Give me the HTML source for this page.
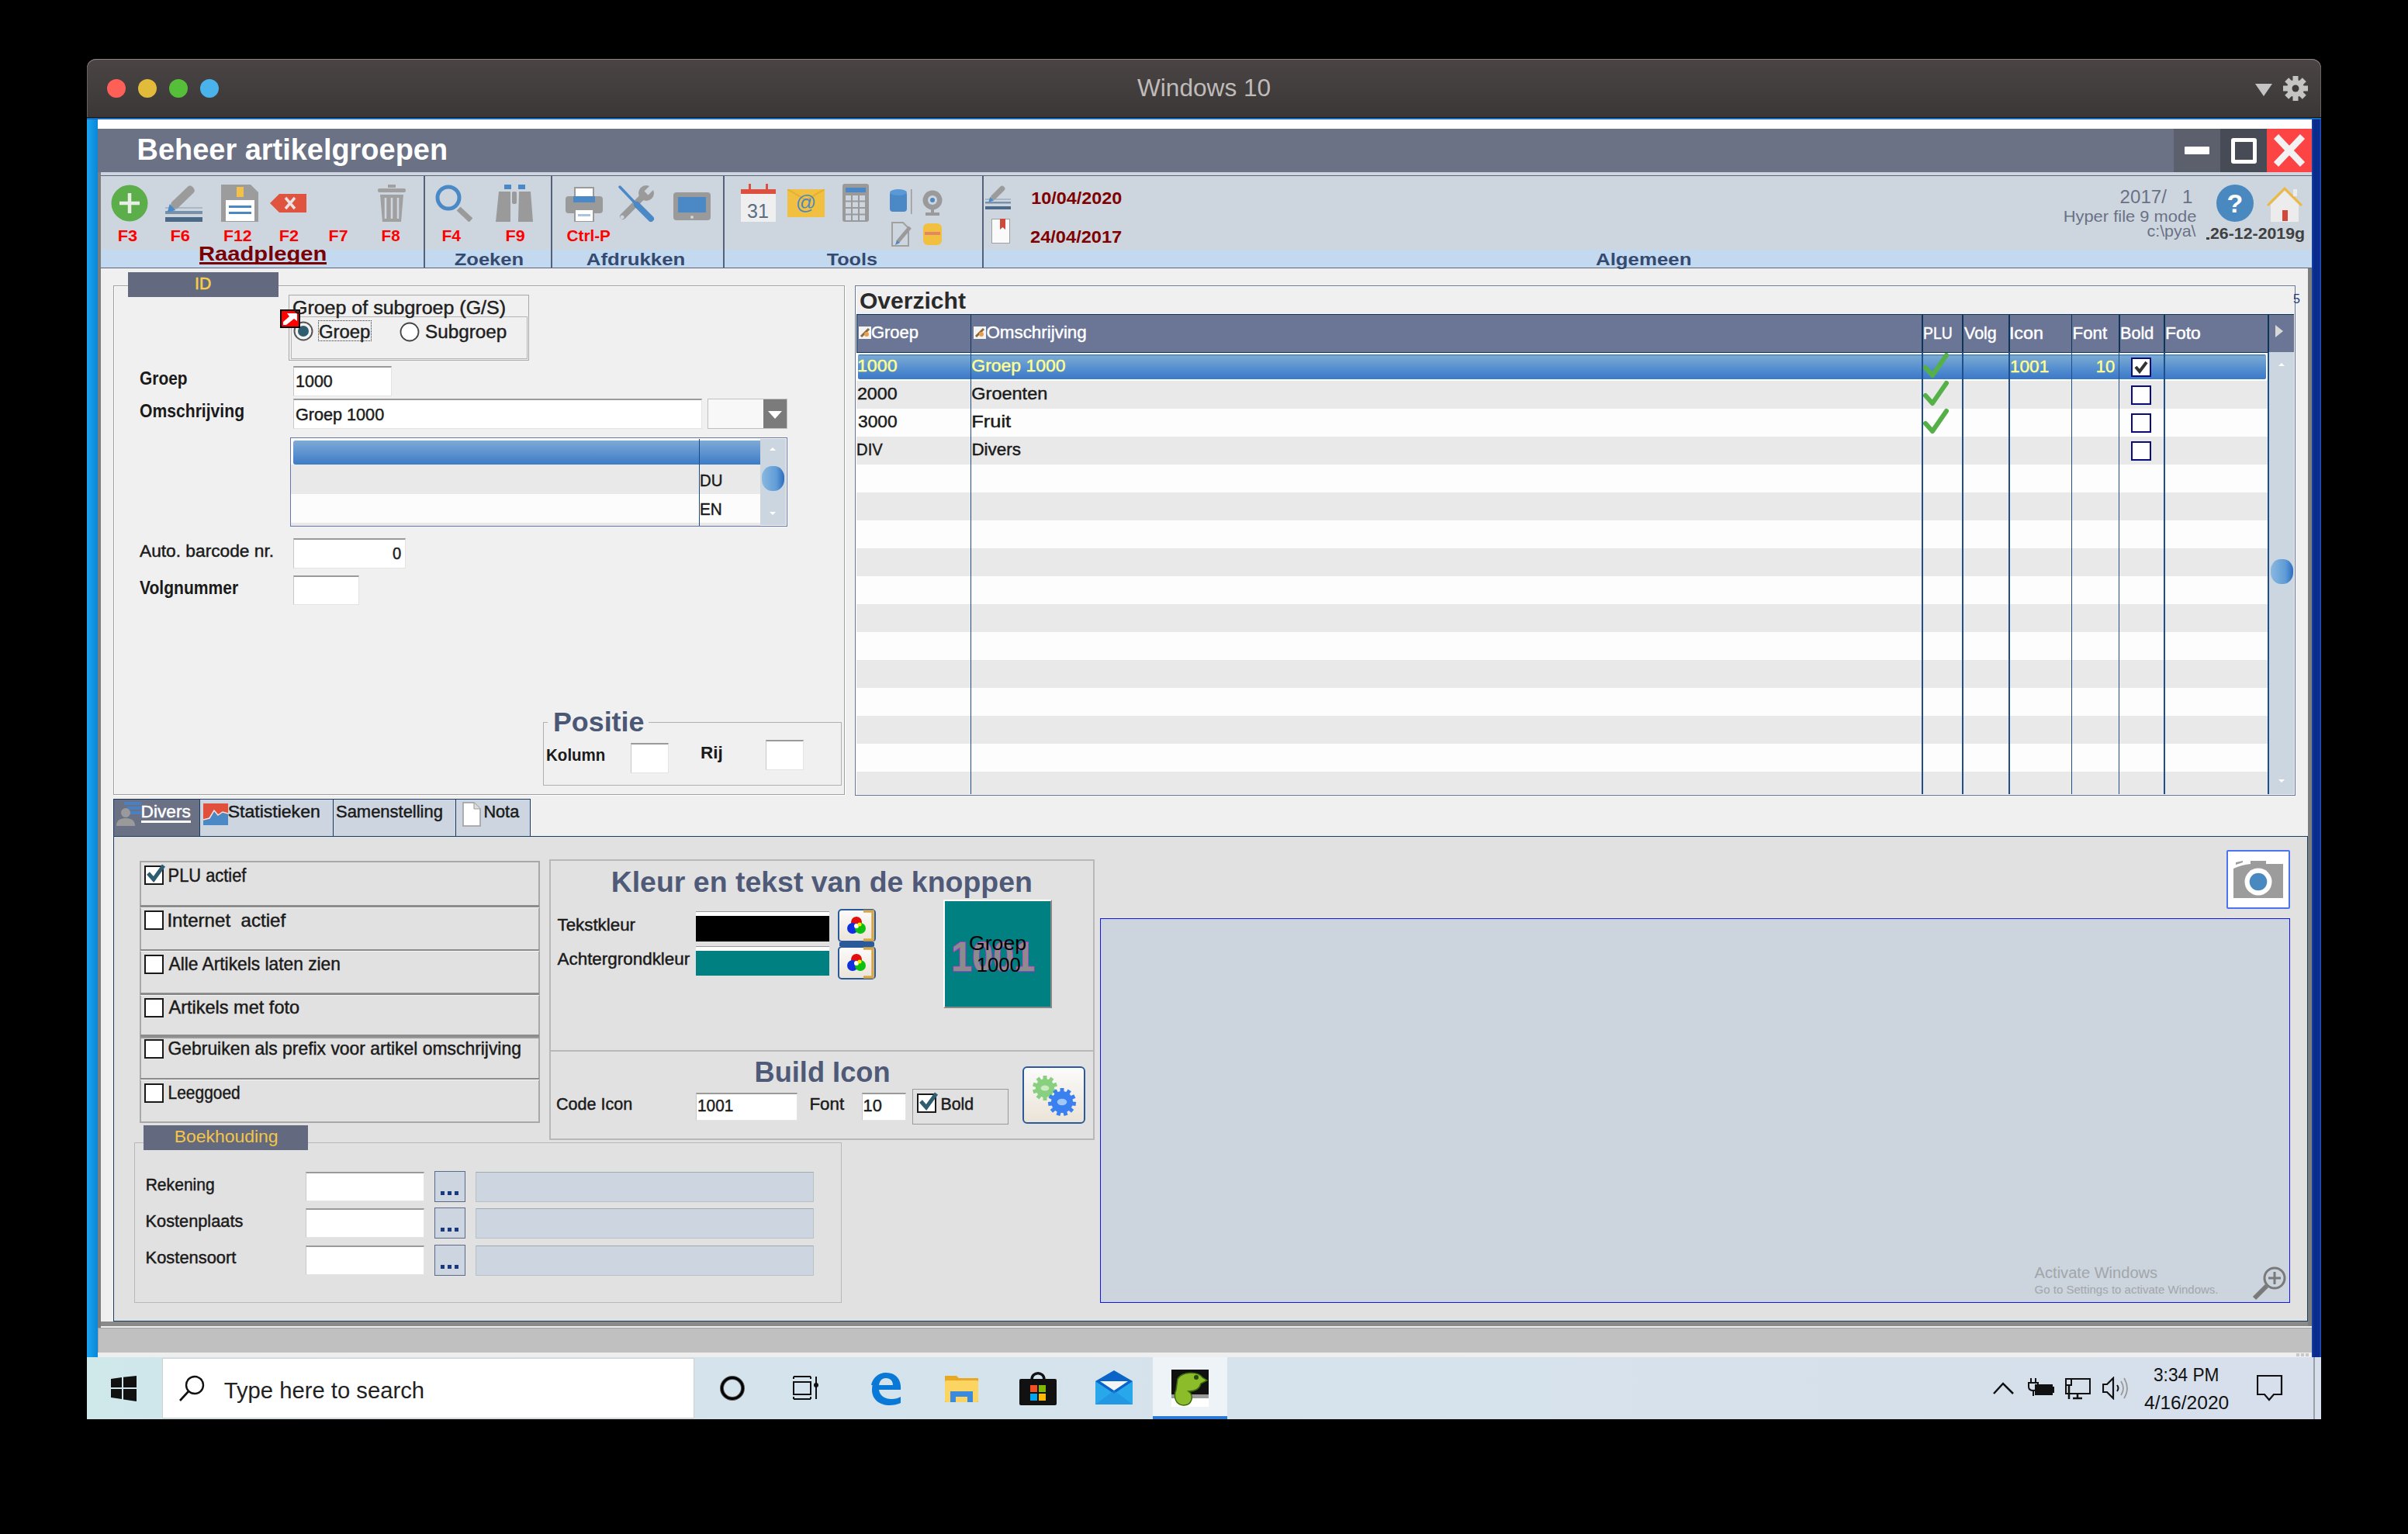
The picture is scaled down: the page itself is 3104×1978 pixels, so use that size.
<!DOCTYPE html>
<html><head><meta charset="utf-8"><title>Beheer artikelgroepen</title>
<style>
html,body{margin:0;padding:0;background:#000;width:3104px;height:1978px;overflow:hidden;font-family:"Liberation Sans",sans-serif}
#root{position:relative;width:3104px;height:1978px;overflow:hidden}
#root>div,#root>svg{position:absolute}
</style></head><body><div id="root">
<div style="left:112px;top:76px;width:2880px;height:76px;background:linear-gradient(#4a4544,#3b3737);border-radius:12px 12px 0 0;box-shadow:inset 0 1px 0 #8c8786, inset 1px 0 0 #666261, inset -1px 0 0 #666261"></div>
<div style="left:138px;top:102px;width:24px;height:24px;background:#fe5f57;border-radius:50%"></div>
<div style="left:178px;top:102px;width:24px;height:24px;background:#e3bb3b;border-radius:50%"></div>
<div style="left:218px;top:102px;width:24px;height:24px;background:#56bf3a;border-radius:50%"></div>
<div style="left:258px;top:102px;width:24px;height:24px;background:#4ab3ec;border-radius:50%"></div>
<svg style="left:2900px;top:95px" width="80" height="40" viewBox="0 0 80 40"><path d="M7 13 L29 13 L18 29 Z" fill="#c4c4c4"/><g transform="translate(59,19)" fill="#c4c4c4"><rect x="-3.5" y="-16" width="7" height="9" transform="rotate(0)"/><rect x="-3.5" y="-16" width="7" height="9" transform="rotate(45)"/><rect x="-3.5" y="-16" width="7" height="9" transform="rotate(90)"/><rect x="-3.5" y="-16" width="7" height="9" transform="rotate(135)"/><rect x="-3.5" y="-16" width="7" height="9" transform="rotate(180)"/><rect x="-3.5" y="-16" width="7" height="9" transform="rotate(225)"/><rect x="-3.5" y="-16" width="7" height="9" transform="rotate(270)"/><rect x="-3.5" y="-16" width="7" height="9" transform="rotate(315)"/><circle r="11"/><circle r="4.5" fill="#3e3a3a"/></g></svg>
<div style="left:112px;top:151px;width:2880px;height:1px;background:#151515;"></div>
<div style="left:112px;top:152px;width:2880px;height:1598px;background:#f0f0f0;"></div>
<div style="left:112px;top:152px;width:14px;height:1598px;background:linear-gradient(90deg,#1aa6f2,#0a86d6);"></div>
<div style="left:2980px;top:152px;width:12px;height:1598px;background:linear-gradient(90deg,#1a48b0 0%,#0a2c8c 20%,#0a2c8c 80%,#2a58c8 100%);"></div>
<div style="left:112px;top:152px;width:2880px;height:2px;background:#1668b8;"></div>
<div style="left:126px;top:154px;width:2854px;height:12px;background:#ffffff;"></div>
<div style="left:126px;top:166px;width:2854px;height:56px;background:#6b7285;"></div>
<div style="left:2802px;top:166px;width:60px;height:56px;background:#5c606c;"></div>
<div style="left:2862px;top:166px;width:60px;height:56px;background:#474b56;"></div>
<div style="left:2922px;top:166px;width:58px;height:56px;background:#fd4444;"></div>
<div style="left:2816px;top:189px;width:32px;height:10px;background:#ffffff;border-radius:1px"></div>
<div style="left:2876px;top:178px;width:33px;height:33px;background:transparent;border:5px solid #fff;border-radius:3px;box-sizing:border-box"></div>
<svg style="left:2922px;top:166px" width="58" height="56"><path d="M12 10 L46 46 M46 10 L12 46" stroke="#f2f2f2" stroke-width="8.5"/></svg>
<div style="left:126px;top:222px;width:4px;height:1490px;background:#7d7d7d;"></div>
<div style="left:2975px;top:346px;width:5px;height:1364px;background:#7d7d7d;"></div>
<div style="left:130px;top:222px;width:2850px;height:5px;background:#cdd6e0;"></div>
<div style="left:130px;top:226px;width:2850px;height:1px;background:#5d6577;"></div>
<div style="left:130px;top:227px;width:2850px;height:95px;background:#cdd6df;"></div>
<div style="left:130px;top:322px;width:2850px;height:23px;background:#c3d9ef;"></div>
<div style="left:130px;top:345px;width:2850px;height:1px;background:#5d6577;"></div>
<div style="left:546px;top:227px;width:2px;height:118px;background:#55607a;"></div>
<div style="left:710px;top:227px;width:2px;height:118px;background:#55607a;"></div>
<div style="left:932px;top:227px;width:2px;height:118px;background:#55607a;"></div>
<div style="left:1266px;top:227px;width:2px;height:118px;background:#55607a;"></div>
<svg style="left:143px;top:238px" width="48" height="48" viewBox="0 0 48 48"><circle cx="24" cy="24" r="23.5" fill="#5bae49"/><path d="M24 11V37M11 24H37" stroke="#e8eee6" stroke-width="4.5"/></svg>
<svg style="left:213px;top:238px" width="48" height="48" viewBox="0 0 48 48"><rect x="0" y="29" width="48" height="2" fill="#a8b8c8"/><rect x="0" y="34" width="48" height="4" fill="#7890a8"/><rect x="0" y="42" width="48" height="6" fill="#4c6a88"/><g transform="rotate(-44 20 19)"><rect x="5" y="13.5" width="37" height="11" rx="4.5" fill="#9b9b9b"/><path d="M5.5 13.5 L-4 19 L5.5 24.5 Z" fill="#4a8ac8"/></g></svg>
<svg style="left:285px;top:238px" width="48" height="48" viewBox="0 0 48 48"><path d="M0 0 H38 L48 10 V48 H0 Z" fill="#9c9c9c"/><rect x="20" y="3" width="9" height="13" fill="#f2c14a"/><rect x="6" y="20" width="37" height="27" fill="#fff"/><rect x="10" y="27" width="29" height="3" fill="#4a88c2"/><rect x="10" y="35" width="29" height="3" fill="#4a88c2"/></svg>
<svg style="left:348px;top:250px" width="47" height="24" viewBox="0 0 47 24"><path d="M0 12 L12 0 H47 V24 H12 Z" fill="#e0533f"/><path d="M20 5 L32 19 M32 5 L20 19" stroke="#e8e2e2" stroke-width="3.5"/></svg>
<svg style="left:487px;top:238px" width="36" height="48" viewBox="0 0 36 48"><rect x="13" y="0" width="10" height="4" fill="#a0a0a0"/><rect x="0" y="5" width="36" height="5" rx="2" fill="#a0a0a0"/><path d="M3 13 H33 L30 48 H6 Z" fill="#a0a0a0"/><path d="M10 17 V44 M18 17 V44 M26 17 V44" stroke="#cdd6df" stroke-width="2.5"/></svg>
<svg style="left:561px;top:238px" width="48" height="48" viewBox="0 0 48 48"><circle cx="17" cy="17" r="14" fill="none" stroke="#4a88c6" stroke-width="5"/><path d="M30 31 L46 46" stroke="#9a9a9a" stroke-width="7"/></svg>
<svg style="left:639px;top:238px" width="48" height="48" viewBox="0 0 48 48"><rect x="11" y="0" width="9" height="6" fill="#4a88c6"/><rect x="29" y="0" width="9" height="6" fill="#4a88c6"/><path d="M4 9 H19 V48 H0 Z" fill="#9a9a9a"/><path d="M30 9 H45 L48 48 H29 Z" fill="#9a9a9a"/><rect x="21" y="9" width="6" height="16" rx="2" fill="#9a9a9a"/></svg>
<svg style="left:729px;top:240px" width="48" height="46" viewBox="0 0 48 46"><rect x="12" y="2" width="24" height="12" fill="#fff" stroke="#9a9a9a" stroke-width="2"/><rect x="0" y="13" width="48" height="22" rx="4" fill="#9a9a9a"/><rect x="10" y="13" width="28" height="8" fill="#4a88c6"/><rect x="12" y="30" width="24" height="16" fill="#fff" stroke="#9a9a9a" stroke-width="2"/><rect x="16" y="36" width="16" height="3" fill="#a8c4e0"/></svg>
<svg style="left:796px;top:238px" width="48" height="48" viewBox="0 0 48 48"><path d="M7 41 L33 15" stroke="#9a9a9a" stroke-width="8" stroke-linecap="round"/><circle cx="37" cy="11" r="10" fill="#9a9a9a"/><rect x="33.5" y="-4" width="7" height="15" transform="rotate(45 37 11)" fill="#cdd6df"/><circle cx="6" cy="42" r="2.5" fill="#cdd6df"/><path d="M3 3 L22 23" stroke="#4a88c6" stroke-width="3.5" stroke-linecap="round"/><path d="M25 26 L43 44" stroke="#4a88c6" stroke-width="8" stroke-linecap="round"/></svg>
<svg style="left:868px;top:248px" width="48" height="36" viewBox="0 0 48 36"><rect x="0" y="0" width="48" height="36" rx="4" fill="#9a9a9a"/><rect x="6" y="6" width="36" height="20" fill="#4a88c6"/><circle cx="24" cy="32" r="2" fill="#cdd6df"/></svg>
<svg style="left:955px;top:237px" width="45" height="49" viewBox="0 0 45 49"><rect x="0" y="7" width="45" height="42" fill="#efefef"/><rect x="0" y="7" width="45" height="6" fill="#dd5040"/><rect x="10" y="0" width="3" height="8" fill="#dd5040"/><rect x="32" y="0" width="3" height="8" fill="#dd5040"/><text x="22" y="44" font-family="Liberation Sans" font-size="25" fill="#5a6e84" text-anchor="middle">31</text></svg>
<svg style="left:1015px;top:244px" width="48" height="36" viewBox="0 0 48 36"><rect width="48" height="36" fill="#f2c040"/><path d="M0 0 L24 14 L48 0" fill="none" stroke="#e4b030" stroke-width="2"/><text x="24" y="26" font-family="Liberation Sans" font-size="26" fill="#4a88c6" text-anchor="middle">@</text></svg>
<svg style="left:1086px;top:237px" width="34" height="49" viewBox="0 0 34 49"><rect width="34" height="49" rx="3" fill="#9a9a9a"/><rect x="4" y="5" width="26" height="6" fill="#4a88c6"/><rect x="4" y="15.0" width="7" height="6.5" fill="#cdd6df"/><rect x="4" y="23.5" width="7" height="6.5" fill="#cdd6df"/><rect x="4" y="32.0" width="7" height="6.5" fill="#cdd6df"/><rect x="4" y="40.5" width="7" height="6.5" fill="#cdd6df"/><rect x="13" y="15.0" width="7" height="6.5" fill="#cdd6df"/><rect x="13" y="23.5" width="7" height="6.5" fill="#cdd6df"/><rect x="13" y="32.0" width="7" height="6.5" fill="#cdd6df"/><rect x="13" y="40.5" width="7" height="6.5" fill="#cdd6df"/><rect x="22" y="15.0" width="7" height="6.5" fill="#cdd6df"/><rect x="22" y="23.5" width="7" height="6.5" fill="#cdd6df"/><rect x="22" y="32.0" width="7" height="6.5" fill="#cdd6df"/><rect x="22" y="40.5" width="7" height="6.5" fill="#cdd6df"/></svg>
<svg style="left:1147px;top:244px" width="30" height="32" viewBox="0 0 30 32"><rect x="0" y="3" width="22" height="26" rx="4" fill="#4a88c6"/><ellipse cx="11" cy="4" rx="11" ry="4" fill="#5a98d6"/><rect x="27" y="0" width="1.5" height="32" fill="#9a9a9a"/></svg>
<svg style="left:1188px;top:245px" width="28" height="33" viewBox="0 0 28 33"><circle cx="14" cy="13" r="12.5" fill="#9a9a9a"/><circle cx="14" cy="13" r="6" fill="#cdd6df"/><circle cx="14" cy="13" r="3" fill="#4a88c6"/><rect x="12" y="24" width="4" height="5" fill="#9a9a9a"/><rect x="5" y="29" width="18" height="4" fill="#9a9a9a"/></svg>
<svg style="left:1149px;top:286px" width="28" height="32" viewBox="0 0 28 32"><path d="M1 1 H15 L22 8 V31 H1 Z" fill="none" stroke="#a0a0a0" stroke-width="2"/><path d="M8 26 L24 7" stroke="#9a9a9a" stroke-width="5"/><path d="M5 30 L7 24 L11 27 Z" fill="#4a88c6"/></svg>
<svg style="left:1190px;top:286px" width="24" height="32" viewBox="0 0 24 32"><rect x="0" y="2" width="24" height="28" rx="6" fill="#f2c040"/><rect x="2" y="13" width="20" height="4" fill="#e07070" opacity=".7"/></svg>
<svg style="left:1270px;top:237px" width="33" height="34" viewBox="0 0 33 34"><rect x="0" y="19" width="33" height="2" fill="#a8b8c8"/><rect x="0" y="23" width="33" height="2.5" fill="#7890a8"/><rect x="0" y="29" width="33" height="4" fill="#4c6a88"/><g transform="rotate(-45 15 13)"><rect x="6" y="9.5" width="22" height="7" rx="3" fill="#9b9b9b"/><path d="M6 9.5 L0 13 L6 16.5 Z" fill="#4a8ac8"/></g></svg>
<svg style="left:1278px;top:282px" width="24" height="32" viewBox="0 0 24 32"><rect x="0.5" y="0.5" width="23" height="31" fill="#fafafa" stroke="#a0a0a0"/><path d="M11 0 H18 V14 L14.5 11 L11 14 Z" fill="#d04a3c"/></svg>
<svg style="left:2857px;top:238px" width="48" height="48" viewBox="0 0 48 48"><circle cx="24" cy="24" r="24" fill="#4a88c0"/><text x="24" y="36" font-family="Liberation Sans" font-weight="bold" font-size="34" fill="#fff" text-anchor="middle">?</text></svg>
<svg style="left:2922px;top:240px" width="46" height="46" viewBox="0 0 46 46"><path d="M5 24 L23 6 L41 24 V46 H5 Z" fill="#ececec"/><path d="M1 25 L23 3 L45 25" fill="none" stroke="#f0b83a" stroke-width="3"/><rect x="34" y="4" width="5" height="9" fill="#ececec"/><rect x="20" y="31" width="7" height="14" fill="#d04a3c"/></svg>
<div style="left:257px;top:338px;width:164px;height:3px;background:#7d0000;"></div>
<div style="left:2844px;top:306px;width:4px;height:2.5px;background:#404040;"></div>
<div style="left:146px;top:368px;width:943px;height:657px;background:transparent;box-sizing:border-box;border:1px solid #a0a0a0;box-shadow:inset 1px 1px 0 #fff, 1px 1px 0 #fff"></div>
<div style="left:165px;top:351px;width:194px;height:32px;background:#636a80;"></div>
<div style="left:372px;top:380px;width:310px;height:85px;background:transparent;border:1px solid #a8a8a8;box-sizing:border-box"></div>
<div style="left:375px;top:408px;width:305px;height:55px;background:transparent;border:1px solid #b4b4b4;box-sizing:border-box"></div>
<svg style="left:378px;top:414px" width="28" height="28"><circle cx="13" cy="13" r="11.5" fill="#f4f4f4" stroke="#555" stroke-width="2"/><circle cx="13" cy="13" r="7" fill="#2e5d70"/></svg>
<svg style="left:514px;top:414px" width="28" height="28"><circle cx="14" cy="14" r="11.5" fill="#fff" stroke="#444" stroke-width="1.8"/></svg>
<div style="left:410px;top:413px;width:69px;height:27px;background:transparent;border:1px dotted #333;box-sizing:border-box"></div>
<svg style="left:361px;top:399px" width="26" height="24"><rect x="1" y="1" width="24" height="22" fill="#f00" stroke="#000" stroke-width="2"/><path d="M4 16 L12 9 L9 5 H22 V15 L18 12 L8 20 H4 Z" fill="#fff"/></svg>
<div style="left:378px;top:472px;width:127px;height:39px;background:#ffffff;box-sizing:border-box;border-top:2px solid #9a9a9a;border-left:1px solid #c8c8c8;border-right:1px solid #e4e4e4;border-bottom:1px solid #e4e4e4"></div>
<div style="left:378px;top:514px;width:527px;height:39px;background:#ffffff;box-sizing:border-box;border-top:2px solid #9a9a9a;border-left:1px solid #c8c8c8;border-right:1px solid #e4e4e4;border-bottom:1px solid #e4e4e4"></div>
<div style="left:912px;top:514px;width:103px;height:39px;background:#f8f8f8;box-sizing:border-box;border:1px solid #c0c0c0"></div>
<div style="left:984px;top:515px;width:30px;height:37px;background:#7b7b7b;"></div>
<svg style="left:984px;top:515px" width="30" height="37"><path d="M6 15 H24 L15 25 Z" fill="#fff"/></svg>
<div style="left:374px;top:564px;width:641px;height:115px;background:#fcfcfc;box-sizing:border-box;border:1px solid #6676a8"></div>
<div style="left:378px;top:568px;width:602px;height:31px;background:linear-gradient(#7eaad6,#3d7cc8);border-radius:3px 0 0 3px"></div>
<div style="left:375px;top:599px;width:605px;height:38px;background:#e9e9e9;"></div>
<div style="left:375px;top:637px;width:605px;height:37px;background:#fcfcfc;"></div>
<div style="left:375px;top:674px;width:605px;height:4px;background:#e9e9e9;"></div>
<div style="left:900.5px;top:566px;width:1.2px;height:112px;background:#1d4a88;"></div>
<div style="left:980px;top:566px;width:33px;height:111px;background:#ccd6e0;"></div>
<div style="left:982px;top:601px;width:29px;height:32px;background:linear-gradient(90deg,#8ab8e0,#5f9cd6 65%,#2d6cc0);border-radius:45%"></div>
<svg style="left:990px;top:575px" width="12" height="8"><path d="M2 6 L6 2 L10 6Z" fill="#fff"/></svg>
<svg style="left:990px;top:658px" width="12" height="8"><path d="M2 2 L6 6 L10 2Z" fill="#fff"/></svg>
<div style="left:378px;top:694px;width:145px;height:39px;background:#ffffff;box-sizing:border-box;border-top:2px solid #9a9a9a;border-left:1px solid #c8c8c8;border-right:1px solid #e4e4e4;border-bottom:1px solid #e4e4e4"></div>
<div style="left:378px;top:742px;width:85px;height:38px;background:#ffffff;box-sizing:border-box;border-top:2px solid #9a9a9a;border-left:1px solid #c8c8c8;border-right:1px solid #e4e4e4;border-bottom:1px solid #e4e4e4"></div>
<div style="left:700px;top:931px;width:385px;height:82px;background:transparent;box-sizing:border-box;border:1px solid #b0b0b0"></div>
<div style="left:706px;top:915px;width:130px;height:24px;background:#f0f0f0;"></div>
<div style="left:813px;top:958px;width:49px;height:39px;background:#ffffff;box-sizing:border-box;border-top:2px solid #9a9a9a;border-left:1px solid #c8c8c8;border-right:1px solid #e4e4e4;border-bottom:1px solid #e4e4e4"></div>
<div style="left:987px;top:954px;width:49px;height:39px;background:#ffffff;box-sizing:border-box;border-top:2px solid #9a9a9a;border-left:1px solid #c8c8c8;border-right:1px solid #e4e4e4;border-bottom:1px solid #e4e4e4"></div>
<div style="left:1102px;top:368px;width:1857px;height:658px;background:transparent;box-sizing:border-box;border:1px solid #6a7595;box-shadow:inset 1px 1px 0 #fff"></div>
<svg style="left:2955px;top:377px" width="14" height="16"><text x="1" y="14" font-family="Liberation Sans" font-size="16" fill="#1a3a80">5</text></svg>
<div style="left:1104px;top:405px;width:1853px;height:49.5px;background:#6b7596;border-top:1px solid #0d3558;border-bottom:1.5px solid #0d3558;border-left:1px solid #0d3558;box-sizing:border-box"></div>
<div style="left:1104px;top:454.5px;width:1820px;height:36px;background:#fdfdfd;"></div>
<div style="left:1104px;top:490.5px;width:1820px;height:36px;background:#e9e9e9;"></div>
<div style="left:1104px;top:526.5px;width:1820px;height:36px;background:#fdfdfd;"></div>
<div style="left:1104px;top:562.5px;width:1820px;height:36px;background:#e9e9e9;"></div>
<div style="left:1104px;top:598.5px;width:1820px;height:36px;background:#fdfdfd;"></div>
<div style="left:1104px;top:634.5px;width:1820px;height:36px;background:#e9e9e9;"></div>
<div style="left:1104px;top:670.5px;width:1820px;height:36px;background:#fdfdfd;"></div>
<div style="left:1104px;top:706.5px;width:1820px;height:36px;background:#e9e9e9;"></div>
<div style="left:1104px;top:742.5px;width:1820px;height:36px;background:#fdfdfd;"></div>
<div style="left:1104px;top:778.5px;width:1820px;height:36px;background:#e9e9e9;"></div>
<div style="left:1104px;top:814.5px;width:1820px;height:36px;background:#fdfdfd;"></div>
<div style="left:1104px;top:850.5px;width:1820px;height:36px;background:#e9e9e9;"></div>
<div style="left:1104px;top:886.5px;width:1820px;height:36px;background:#fdfdfd;"></div>
<div style="left:1104px;top:922.5px;width:1820px;height:36px;background:#e9e9e9;"></div>
<div style="left:1104px;top:958.5px;width:1820px;height:36px;background:#fdfdfd;"></div>
<div style="left:1104px;top:994.5px;width:1820px;height:29.5px;background:#e9e9e9;"></div>
<div style="left:1106px;top:457px;width:1815px;height:32px;background:linear-gradient(#4a84c8 0,#4a84c8 1px,#7aaad2 2px,#5a92d0 50%,#3a78c8);border-radius:2px"></div>
<div style="left:2924px;top:454px;width:33px;height:570px;background:#ccd6e0;"></div>
<div style="left:2927px;top:721px;width:29px;height:32px;background:linear-gradient(90deg,#8ab8e0,#5f9cd6 65%,#2d6cc0);border-radius:45%"></div>
<svg style="left:2935px;top:466px" width="12" height="8"><path d="M2 6 L6 2 L10 6Z" fill="#fff"/></svg>
<svg style="left:2935px;top:1003px" width="12" height="8"><path d="M2 2 L6 6 L10 2Z" fill="#fff"/></svg>
<svg style="left:2930px;top:417px" width="16" height="20"><path d="M3 2 L13 10 L3 18Z" fill="#d8d8d8"/></svg>
<div style="left:1250.75px;top:405px;width:1.6px;height:49px;background:#0d3558;"></div>
<div style="left:1250.75px;top:454px;width:1.3px;height:570px;background:#1f4f8a;"></div>
<div style="left:2477.45px;top:405px;width:1.6px;height:49px;background:#0d3558;"></div>
<div style="left:2477.45px;top:454px;width:1.3px;height:570px;background:#1f4f8a;"></div>
<div style="left:2529.25px;top:405px;width:1.6px;height:49px;background:#0d3558;"></div>
<div style="left:2529.25px;top:454px;width:1.3px;height:570px;background:#1f4f8a;"></div>
<div style="left:2589.25px;top:405px;width:1.6px;height:49px;background:#0d3558;"></div>
<div style="left:2589.25px;top:454px;width:1.3px;height:570px;background:#1f4f8a;"></div>
<div style="left:2669.55px;top:405px;width:1.6px;height:49px;background:#0d3558;"></div>
<div style="left:2669.55px;top:454px;width:1.3px;height:570px;background:#1f4f8a;"></div>
<div style="left:2731.15px;top:405px;width:1.6px;height:49px;background:#0d3558;"></div>
<div style="left:2731.15px;top:454px;width:1.3px;height:570px;background:#1f4f8a;"></div>
<div style="left:2789.25px;top:405px;width:1.6px;height:49px;background:#0d3558;"></div>
<div style="left:2789.25px;top:454px;width:1.3px;height:570px;background:#1f4f8a;"></div>
<div style="left:2923.45px;top:405px;width:1.6px;height:49px;background:#0d3558;"></div>
<div style="left:2923.45px;top:454px;width:1.3px;height:570px;background:#1f4f8a;"></div>
<div style="left:1102px;top:1024.5px;width:1857px;height:1.5px;background:#6a7595;"></div>
<svg style="left:1107px;top:421px" width="16" height="16"><rect width="16" height="16" fill="#f4f4f4"/><path d="M3 13 L13 3" stroke="#8a6a3a" stroke-width="3"/><circle cx="10" cy="10" r="3" fill="#e8a050"/></svg>
<svg style="left:1255px;top:421px" width="16" height="16"><rect width="16" height="16" fill="#f4f4f4"/><path d="M3 13 L13 3" stroke="#8a6a3a" stroke-width="3"/><circle cx="10" cy="10" r="3" fill="#e8a050"/></svg>
<svg style="left:2478px;top:454px" width="36" height="34"><path d="M4 20 L13 30 L31 4" fill="none" stroke="#55b048" stroke-width="6" stroke-linecap="round" stroke-linejoin="round"/></svg>
<svg style="left:2478px;top:490px" width="36" height="34"><path d="M4 20 L13 30 L31 4" fill="none" stroke="#55b048" stroke-width="6" stroke-linecap="round" stroke-linejoin="round"/></svg>
<svg style="left:2478px;top:526px" width="36" height="34"><path d="M4 20 L13 30 L31 4" fill="none" stroke="#55b048" stroke-width="6" stroke-linecap="round" stroke-linejoin="round"/></svg>
<div style="left:2747px;top:460.5px;width:25.5px;height:25.5px;background:#ffffff;box-sizing:border-box;border:2.5px solid #0a0a7a"></div>
<div style="left:2747px;top:496.5px;width:25.5px;height:25.5px;background:#ffffff;box-sizing:border-box;border:2.5px solid #0a0a7a"></div>
<div style="left:2747px;top:532.5px;width:25.5px;height:25.5px;background:#ffffff;box-sizing:border-box;border:2.5px solid #0a0a7a"></div>
<div style="left:2747px;top:568.5px;width:25.5px;height:25.5px;background:#ffffff;box-sizing:border-box;border:2.5px solid #0a0a7a"></div>
<svg style="left:2750px;top:464px" width="20" height="18"><path d="M3 9 L8 15 L17 3" fill="none" stroke="#333" stroke-width="4"/></svg>
<div style="left:146px;top:1030px;width:112px;height:48px;background:#6b7185;box-sizing:border-box;border:1.5px solid #1a3a60;border-bottom:none"></div>
<div style="left:258px;top:1030px;width:172px;height:48px;background:#cdd6e0;box-sizing:border-box;border:1.5px solid #1a3a60;border-bottom:none;border-left:none"></div>
<div style="left:430px;top:1030px;width:158px;height:48px;background:#cdd6e0;box-sizing:border-box;border:1.5px solid #1a3a60;border-bottom:none;border-left:none"></div>
<div style="left:588px;top:1030px;width:96px;height:48px;background:#cdd6e0;box-sizing:border-box;border:1.5px solid #1a3a60;border-bottom:none;border-left:none"></div>
<div style="left:182px;top:1058px;width:64px;height:2.5px;background:#ffffff;"></div>
<svg style="left:150px;top:1034px" width="34" height="32" viewBox="0 0 34 32"><rect x="10" y="0" width="22" height="4" fill="#4a80c0"/><rect x="14" y="6" width="18" height="4" fill="#4a80c0"/><rect x="14" y="12" width="18" height="4" fill="#4a80c0"/><circle cx="12" cy="14" r="6" fill="#9a9a9a"/><path d="M0 31 Q0 21 12 21 Q24 21 24 31 Z" fill="#9a9a9a"/></svg>
<svg style="left:262px;top:1036px" width="32" height="28" viewBox="0 0 32 28"><rect width="32" height="28" fill="#e0503c"/><path d="M0 28 V22 L8 20 L14 10 L19 16 L25 12 L32 14 V28 Z" fill="#4a88c6"/><path d="M0 21 L8 19 L14 9 L19 15 L25 11 L32 13" fill="none" stroke="#e8e8e8" stroke-width="1.5"/></svg>
<svg style="left:596px;top:1034px" width="24" height="32" viewBox="0 0 24 32"><path d="M1 1 H15 L23 9 V31 H1 Z" fill="#fff" stroke="#9a9a9a" stroke-width="1.5"/><path d="M15 1 V9 H23" fill="#ddd" stroke="#9a9a9a" stroke-width="1"/></svg>
<div style="left:146px;top:1077.5px;width:2829px;height:626.5px;background:#e1e1e1;box-sizing:border-box;border-top:1.5px solid #1c3e5e;border-left:1.5px solid #1c3e5e;border-right:1px solid #1c3e5e;border-bottom:1.5px solid #1c3e5e"></div>
<div style="left:130px;top:1704px;width:2845px;height:6px;background:#8a8a8a;"></div>
<div style="left:180px;top:1110px;width:516px;height:338px;background:transparent;box-sizing:border-box;border:2px solid #a8a8a8"></div>
<div style="left:181px;top:1167px;width:514px;height:2.5px;background:#8c8c8c;"></div>
<div style="left:181px;top:1169.5px;width:514px;height:1px;background:#f4f4f4;"></div>
<div style="left:181px;top:1223.5px;width:514px;height:2.5px;background:#8c8c8c;"></div>
<div style="left:181px;top:1226.0px;width:514px;height:1px;background:#f4f4f4;"></div>
<div style="left:181px;top:1280px;width:514px;height:2.5px;background:#8c8c8c;"></div>
<div style="left:181px;top:1282.5px;width:514px;height:1px;background:#f4f4f4;"></div>
<div style="left:181px;top:1334px;width:514px;height:2.5px;background:#8c8c8c;"></div>
<div style="left:181px;top:1336.5px;width:514px;height:1px;background:#f4f4f4;"></div>
<div style="left:181px;top:1389.5px;width:514px;height:2.5px;background:#8c8c8c;"></div>
<div style="left:181px;top:1392.0px;width:514px;height:1px;background:#f4f4f4;"></div>
<div style="left:181px;top:1337px;width:514px;height:2px;background:#9a9a9a;"></div>
<div style="left:185.5px;top:1116px;width:25px;height:25px;background:#ffffff;box-sizing:border-box;border:2.5px solid #1a1a1a"></div>
<svg style="left:187.5px;top:1113px" width="26" height="26"><path d="M3 13 L10 21 L23 3" fill="none" stroke="#2e5d70" stroke-width="5"/></svg>
<div style="left:185.5px;top:1174px;width:25px;height:25px;background:#ffffff;box-sizing:border-box;border:2.5px solid #1a1a1a"></div>
<div style="left:185.5px;top:1230.7px;width:25px;height:25px;background:#ffffff;box-sizing:border-box;border:2.5px solid #1a1a1a"></div>
<div style="left:185.5px;top:1286.6px;width:25px;height:25px;background:#ffffff;box-sizing:border-box;border:2.5px solid #1a1a1a"></div>
<div style="left:185.5px;top:1340px;width:25px;height:25px;background:#ffffff;box-sizing:border-box;border:2.5px solid #1a1a1a"></div>
<div style="left:185.5px;top:1396.7px;width:25px;height:25px;background:#ffffff;box-sizing:border-box;border:2.5px solid #1a1a1a"></div>
<div style="left:708px;top:1108px;width:703px;height:362px;background:transparent;box-sizing:border-box;border:2px solid #b8b8b8"></div>
<div style="left:710px;top:1354px;width:699px;height:2px;background:#b8b8b8;"></div>
<div style="left:897px;top:1176px;width:172px;height:38px;background:#000;box-sizing:border-box;border-top:5px solid #fff;box-shadow:0 -1px 0 #999"></div>
<div style="left:897px;top:1221px;width:172px;height:37px;background:#008080;box-sizing:border-box;border-top:5px solid #fff;box-shadow:0 -1px 0 #999"></div>
<div style="left:1082px;top:1215px;width:45px;height:5px;background:#2a5a9a;"></div>
<div style="left:1080px;top:1172px;width:49px;height:43px;background:linear-gradient(#fbfbfb,#ece4d8);box-sizing:border-box;border:2px solid #2a5a9a;border-radius:5px"></div>
<svg style="left:1080px;top:1172px" width="49" height="43"><path d="M33 3 H45 V40 H33" fill="none" stroke="#d8a848" stroke-width="3.5"/><circle cx="24" cy="17" r="7" fill="#e01010"/><circle cx="19" cy="25" r="7" fill="#1030e0"/><circle cx="29" cy="25" r="7" fill="#10c010"/><circle cx="24" cy="22" r="3" fill="#fff"/><circle cx="28" cy="20" r="2.5" fill="#f0f000"/></svg>
<div style="left:1080px;top:1219.5px;width:49px;height:43px;background:linear-gradient(#fbfbfb,#ece4d8);box-sizing:border-box;border:2px solid #2a5a9a;border-radius:5px"></div>
<svg style="left:1080px;top:1219.5px" width="49" height="43"><path d="M33 3 H45 V40 H33" fill="none" stroke="#d8a848" stroke-width="3.5"/><circle cx="24" cy="17" r="7" fill="#e01010"/><circle cx="19" cy="25" r="7" fill="#1030e0"/><circle cx="29" cy="25" r="7" fill="#10c010"/><circle cx="24" cy="22" r="3" fill="#fff"/><circle cx="28" cy="20" r="2.5" fill="#f0f000"/></svg>
<div style="left:1216px;top:1160px;width:140px;height:140px;background:#008080;box-sizing:border-box;border-top:2px solid #fff;border-left:2px solid #fff;border-right:2px solid #888;border-bottom:2px solid #888"></div>
<div style="left:896.5px;top:1408.5px;width:131px;height:36px;background:#ffffff;box-sizing:border-box;border-top:2px solid #9a9a9a;border-left:1px solid #c8c8c8;border-right:1px solid #e4e4e4;border-bottom:1px solid #e4e4e4"></div>
<div style="left:1110.6px;top:1408.5px;width:57px;height:36px;background:#ffffff;box-sizing:border-box;border-top:2px solid #9a9a9a;border-left:1px solid #c8c8c8;border-right:1px solid #e4e4e4;border-bottom:1px solid #e4e4e4"></div>
<div style="left:1176px;top:1404px;width:124px;height:46px;background:transparent;box-sizing:border-box;border:1.5px solid #9a9a9a"></div>
<div style="left:1181.5px;top:1410px;width:25px;height:25px;background:#ffffff;box-sizing:border-box;border:2.5px solid #1a1a1a"></div>
<svg style="left:1183.5px;top:1407px" width="26" height="26"><path d="M3 13 L10 21 L23 3" fill="none" stroke="#2e5d70" stroke-width="5"/></svg>
<div style="left:1318px;top:1375px;width:81px;height:74px;background:linear-gradient(#fbfbfb,#ebe3d6);box-sizing:border-box;border:2px solid #2a5a9a;border-radius:6px"></div>
<svg style="left:1325px;top:1385px" width="68" height="56" viewBox="0 0 68 56"><g transform="translate(22,18)" fill="#88d080"><rect x="-2.5" y="-16" width="5" height="8" transform="rotate(0.0)"/><rect x="-2.5" y="-16" width="5" height="8" transform="rotate(36.0)"/><rect x="-2.5" y="-16" width="5" height="8" transform="rotate(72.0)"/><rect x="-2.5" y="-16" width="5" height="8" transform="rotate(108.0)"/><rect x="-2.5" y="-16" width="5" height="8" transform="rotate(144.0)"/><rect x="-2.5" y="-16" width="5" height="8" transform="rotate(180.0)"/><rect x="-2.5" y="-16" width="5" height="8" transform="rotate(216.0)"/><rect x="-2.5" y="-16" width="5" height="8" transform="rotate(252.0)"/><rect x="-2.5" y="-16" width="5" height="8" transform="rotate(288.0)"/><rect x="-2.5" y="-16" width="5" height="8" transform="rotate(324.0)"/><circle r="12"/><ellipse rx="5.4" ry="3.5999999999999996" fill="#c8ecc0"/></g><g transform="translate(44,36)" fill="#3a80f0"><rect x="-2.5" y="-18" width="5" height="8" transform="rotate(0.0)"/><rect x="-2.5" y="-18" width="5" height="8" transform="rotate(32.72727272727273)"/><rect x="-2.5" y="-18" width="5" height="8" transform="rotate(65.45454545454545)"/><rect x="-2.5" y="-18" width="5" height="8" transform="rotate(98.18181818181819)"/><rect x="-2.5" y="-18" width="5" height="8" transform="rotate(130.9090909090909)"/><rect x="-2.5" y="-18" width="5" height="8" transform="rotate(163.63636363636363)"/><rect x="-2.5" y="-18" width="5" height="8" transform="rotate(196.36363636363637)"/><rect x="-2.5" y="-18" width="5" height="8" transform="rotate(229.0909090909091)"/><rect x="-2.5" y="-18" width="5" height="8" transform="rotate(261.8181818181818)"/><rect x="-2.5" y="-18" width="5" height="8" transform="rotate(294.54545454545456)"/><rect x="-2.5" y="-18" width="5" height="8" transform="rotate(327.27272727272725)"/><circle r="14"/><ellipse rx="6.3" ry="4.2" fill="#a0c8f8"/></g></svg>
<div style="left:173px;top:1473px;width:912px;height:207px;background:transparent;box-sizing:border-box;border:1.5px solid #b8b8b8"></div>
<div style="left:185px;top:1451px;width:212px;height:32px;background:#636a80;"></div>
<div style="left:394.4px;top:1510.5px;width:153px;height:38px;background:#ffffff;box-sizing:border-box;border-top:2px solid #9a9a9a;border-left:1px solid #c8c8c8;border-right:1px solid #e4e4e4;border-bottom:1px solid #e4e4e4"></div>
<div style="left:560px;top:1509.5px;width:40px;height:40px;background:#cdd6e0;box-sizing:border-box;border:1.5px solid #5a6a8a"></div>
<div style="left:568px;top:1535.5px;width:5px;height:5px;background:#1a3a80;"></div>
<div style="left:577px;top:1535.5px;width:5px;height:5px;background:#1a3a80;"></div>
<div style="left:586px;top:1535.5px;width:5px;height:5px;background:#1a3a80;"></div>
<div style="left:612.5px;top:1510.5px;width:436px;height:39px;background:#cdd6e0;box-sizing:border-box;border:1px solid #b8c0c8;border-top:1px solid #a0a8b0"></div>
<div style="left:394.4px;top:1558px;width:153px;height:38px;background:#ffffff;box-sizing:border-box;border-top:2px solid #9a9a9a;border-left:1px solid #c8c8c8;border-right:1px solid #e4e4e4;border-bottom:1px solid #e4e4e4"></div>
<div style="left:560px;top:1557px;width:40px;height:40px;background:#cdd6e0;box-sizing:border-box;border:1.5px solid #5a6a8a"></div>
<div style="left:568px;top:1583px;width:5px;height:5px;background:#1a3a80;"></div>
<div style="left:577px;top:1583px;width:5px;height:5px;background:#1a3a80;"></div>
<div style="left:586px;top:1583px;width:5px;height:5px;background:#1a3a80;"></div>
<div style="left:612.5px;top:1558px;width:436px;height:39px;background:#cdd6e0;box-sizing:border-box;border:1px solid #b8c0c8;border-top:1px solid #a0a8b0"></div>
<div style="left:394.4px;top:1606px;width:153px;height:38px;background:#ffffff;box-sizing:border-box;border-top:2px solid #9a9a9a;border-left:1px solid #c8c8c8;border-right:1px solid #e4e4e4;border-bottom:1px solid #e4e4e4"></div>
<div style="left:560px;top:1605px;width:40px;height:40px;background:#cdd6e0;box-sizing:border-box;border:1.5px solid #5a6a8a"></div>
<div style="left:568px;top:1631px;width:5px;height:5px;background:#1a3a80;"></div>
<div style="left:577px;top:1631px;width:5px;height:5px;background:#1a3a80;"></div>
<div style="left:586px;top:1631px;width:5px;height:5px;background:#1a3a80;"></div>
<div style="left:612.5px;top:1606px;width:436px;height:39px;background:#cdd6e0;box-sizing:border-box;border:1px solid #b8c0c8;border-top:1px solid #a0a8b0"></div>
<div style="left:2870px;top:1096px;width:82px;height:76px;background:#ffffff;box-sizing:border-box;border:2px solid #4a74f4;border-radius:2px"></div>
<svg style="left:2870px;top:1096px" width="82" height="76" viewBox="0 0 82 76"><path d="M9 24 Q20 19 31 18 V14 H51 V18 H73 V62 H9 Z" fill="#9c9c9c"/><path d="M12 19 L21 16 L21 14 L12 16 Z" fill="#9c9c9c"/><circle cx="41" cy="41" r="17.5" fill="#ffffff"/><circle cx="41" cy="41" r="11.3" fill="#4a88c0"/></svg>
<div style="left:1418px;top:1183.7px;width:1534px;height:496px;background:#ccd5de;box-sizing:border-box;border:1.5px solid #1414f0"></div>
<svg style="left:2900px;top:1630px" width="52" height="50" viewBox="0 0 52 50"><circle cx="32" cy="18" r="13" fill="none" stroke="#7a7a7a" stroke-width="3"/><path d="M32 10 V26 M24 18 H40" stroke="#7a7a7a" stroke-width="3"/><path d="M22 28 L6 44" stroke="#7a7a7a" stroke-width="6"/></svg>
<div style="left:126px;top:1712px;width:2854px;height:32px;background:#c0c0c0;box-sizing:border-box;border-top:1.5px solid #a0a0a0;border-left:1px solid #a0a0a0"></div>
<div style="left:126px;top:1744px;width:2854px;height:6px;background:#eeeeee;"></div>
<div style="left:2960px;top:1745px;width:4px;height:4px;background:#c8c8c8;"></div>
<div style="left:2966px;top:1745px;width:4px;height:4px;background:#c8c8c8;"></div>
<div style="left:2972px;top:1745px;width:4px;height:4px;background:#c8c8c8;"></div>
<div style="left:112px;top:1750px;width:2880px;height:80px;background:linear-gradient(90deg,#cfe8ea 0%,#d3e3ec 20%,#d6e2ec 60%,#d6dfeb 100%);"></div>
<svg style="left:143px;top:1774px" width="34" height="33" viewBox="0 0 34 33"><path d="M0 4 L14 2 V15 H0 Z M16 1.7 L33 0 V15 H16 Z M0 17 H14 V30 L0 28 Z M16 17 H33 V33 L16 30.5 Z" fill="#111"/></svg>
<div style="left:209px;top:1751px;width:686px;height:78px;background:#ffffff;box-sizing:border-box;border:1.5px solid #d0d0d0"></div>
<svg style="left:230px;top:1772px" width="36" height="36" viewBox="0 0 36 36"><circle cx="21" cy="14" r="11" fill="none" stroke="#111" stroke-width="2.4"/><path d="M13 22 L2 34" stroke="#111" stroke-width="2.6"/></svg>
<svg style="left:926px;top:1772px" width="36" height="36" viewBox="0 0 36 36"><circle cx="18" cy="18" r="13.5" fill="none" stroke="#555" stroke-width="5"/><circle cx="18" cy="18" r="13.5" fill="none" stroke="#000" stroke-width="3"/></svg>
<svg style="left:1022px;top:1774px" width="36" height="32" viewBox="0 0 36 32"><path d="M1 1 H23 M1 30 H23 M1 1 V4 M23 1 V4 M1 30 V27 M23 27 V30" stroke="#111" stroke-width="2"/><rect x="1" y="8" width="22" height="16" fill="none" stroke="#111" stroke-width="2"/><path d="M30 1 V30" stroke="#111" stroke-width="2"/><circle cx="30" cy="12" r="3" fill="#111"/></svg>
<svg style="left:1121px;top:1768px" width="42" height="44" viewBox="0 0 42 44"><path d="M21 2 C35 2 41 12 40 24 H12 C13 32 20 36 28 36 C33 36 37 35 40 33 V41 C36 43 31 44 26 44 C12 44 3 36 3 24 C3 12 10 2 21 2 Z M12 18 H30 C30 12 26 9 21 9 C16 9 13 12 12 18 Z" fill="#0a78d7"/><path d="M2 18 C4 8 12 2 22 2 C14 4 8 10 6 18 Z" fill="#0a78d7"/></svg>
<svg style="left:1218px;top:1772px" width="44" height="37" viewBox="0 0 44 37"><path d="M0 2 H15 L18 5 H43 V36 H0 Z" fill="#e8a822"/><rect x="0" y="8" width="43" height="28" rx="2" fill="#fcd462"/><path d="M7 36 V22 H36 V36 H29 V29 H14 V36 Z" fill="#3a8ae0"/></svg>
<svg style="left:1314px;top:1766px" width="48" height="46" viewBox="0 0 48 46"><path d="M16 13 C16 2 32 2 32 13" fill="none" stroke="#111" stroke-width="3.5"/><rect x="0" y="12" width="48" height="34" rx="2" fill="#111"/><rect x="14" y="20" width="9" height="9" fill="#f25022"/><rect x="25" y="20" width="9" height="9" fill="#7fba00"/><rect x="14" y="31" width="9" height="9" fill="#00a4ef"/><rect x="25" y="31" width="9" height="9" fill="#ffb900"/></svg>
<svg style="left:1412px;top:1767px" width="48" height="44" viewBox="0 0 48 44"><path d="M0 14 L24 0 L48 14 V44 H0 Z" fill="#0a64c8"/><path d="M6 14 H42 L24 26 Z" fill="#f4f4f4"/><path d="M0 14 L24 30 L48 14 V44 H0 Z" fill="#28a8ea"/><path d="M0 44 L24 26 L48 44 Z" fill="#1e8ee0" opacity=".6"/></svg>
<div style="left:1486px;top:1750px;width:96px;height:80px;background:#eef3f7;"></div>
<div style="left:1486px;top:1826px;width:96px;height:4px;background:#2a7ad5;"></div>
<svg style="left:1510px;top:1766px" width="48" height="48" viewBox="0 0 48 48"><rect width="48" height="48" fill="#111"/><rect x="0" y="32" width="48" height="5" fill="#9a9a9a"/><rect x="0" y="37" width="48" height="11" fill="#fff"/><path d="M8 12 C14 2 34 2 40 10 L46 14 L38 18 C36 26 30 28 22 28 C30 34 26 46 16 46 C6 46 2 36 6 26 Z" fill="#8cbc2a" stroke="#3a6a10" stroke-width="1.5"/><circle cx="32" cy="10" r="3" fill="#2a4a10"/></svg>
<svg style="left:2568px;top:1780px" width="30" height="20" viewBox="0 0 30 20"><path d="M2 17 L14 4 L27 17" fill="none" stroke="#111" stroke-width="2.5"/></svg>
<svg style="left:2614px;top:1776px" width="34" height="26" viewBox="0 0 34 26"><path d="M4 1 V7 M10 1 V7 M1 7 H13 V12 Q13 17 7 17 Q1 17 1 12 Z M7 17 V24" fill="none" stroke="#111" stroke-width="2"/><rect x="9" y="9" width="23" height="14" fill="#111"/><rect x="32" y="12" width="2" height="8" fill="#111"/></svg>
<svg style="left:2662px;top:1777px" width="34" height="28" viewBox="0 0 34 28"><rect x="1" y="1" width="31" height="19" fill="none" stroke="#111" stroke-width="2"/><rect x="1" y="1" width="7" height="8" fill="none" stroke="#111" stroke-width="2"/><path d="M5 9 V27 M10 26 H22 M16 20 V26" stroke="#111" stroke-width="2.5"/></svg>
<svg style="left:2710px;top:1775px" width="34" height="30" viewBox="0 0 34 30"><path d="M1 10 H6 L14 2 V28 L6 20 H1 Z" fill="none" stroke="#111" stroke-width="2.2"/><path d="M19 11 Q22 15 19 19" fill="none" stroke="#111" stroke-width="2"/><path d="M24 6 Q30 15 24 24" fill="none" stroke="#999" stroke-width="1.8"/><path d="M28 2 Q36 15 28 28" fill="none" stroke="#999" stroke-width="1.8"/></svg>
<svg style="left:2909px;top:1773px" width="34" height="36" viewBox="0 0 34 36"><path d="M1 1 H32 V25 H22 L16 32 L10 25 H1 Z" fill="none" stroke="#111" stroke-width="2.2"/></svg>
<div style="left:2982px;top:1750px;width:1.5px;height:80px;background:#9aa0a8;"></div>
<svg style="left:0;top:0" width="3104" height="1978" viewBox="0 0 3104 1978">
<text transform="translate(1466.00,123.50) scale(1.0201,1)" font-family="Liberation Sans" font-size="31" fill="#bfbbb9" xml:space="preserve">Windows 10</text>
<text transform="translate(176.60,206.00) scale(0.9984,1)" font-family="Liberation Sans" font-size="38" fill="#ffffff" font-weight="bold" xml:space="preserve">Beheer artikelgroepen</text>
<text transform="translate(151.66,310.50) scale(1.0382,1)" font-family="Liberation Sans" font-size="21" fill="#ff0000" font-weight="bold" xml:space="preserve">F3</text>
<text transform="translate(219.46,310.50) scale(1.0426,1)" font-family="Liberation Sans" font-size="21" fill="#ff0000" font-weight="bold" xml:space="preserve">F6</text>
<text transform="translate(287.99,310.50) scale(1.0143,1)" font-family="Liberation Sans" font-size="21" fill="#ff0000" font-weight="bold" xml:space="preserve">F12</text>
<text transform="translate(359.67,310.50) scale(1.0338,1)" font-family="Liberation Sans" font-size="21" fill="#ff0000" font-weight="bold" xml:space="preserve">F2</text>
<text transform="translate(423.58,310.50) scale(1.0207,1)" font-family="Liberation Sans" font-size="21" fill="#ff0000" font-weight="bold" xml:space="preserve">F7</text>
<text transform="translate(491.51,310.50) scale(0.9862,1)" font-family="Liberation Sans" font-size="21" fill="#ff0000" font-weight="bold" xml:space="preserve">F8</text>
<text transform="translate(569.50,310.50) scale(1.0030,1)" font-family="Liberation Sans" font-size="21" fill="#ff0000" font-weight="bold" xml:space="preserve">F4</text>
<text transform="translate(651.47,310.50) scale(1.0295,1)" font-family="Liberation Sans" font-size="21" fill="#ff0000" font-weight="bold" xml:space="preserve">F9</text>
<text transform="translate(730.50,310.50) scale(0.9885,1)" font-family="Liberation Sans" font-size="21" fill="#ff0000" font-weight="bold" xml:space="preserve">Ctrl-P</text>
<text transform="translate(255.88,336.00) scale(1.1238,1)" font-family="Liberation Sans" font-size="26" fill="#7d0000" font-weight="bold" xml:space="preserve">Raadplegen</text>
<text transform="translate(585.70,341.50) scale(1.1621,1)" font-family="Liberation Sans" font-size="22" fill="#344a70" font-weight="bold" xml:space="preserve">Zoeken</text>
<text transform="translate(755.80,341.50) scale(1.1720,1)" font-family="Liberation Sans" font-size="22" fill="#344a70" font-weight="bold" xml:space="preserve">Afdrukken</text>
<text transform="translate(1065.70,341.50) scale(1.1445,1)" font-family="Liberation Sans" font-size="22" fill="#344a70" font-weight="bold" xml:space="preserve">Tools</text>
<text transform="translate(2057.00,341.50) scale(1.1747,1)" font-family="Liberation Sans" font-size="22" fill="#344a70" font-weight="bold" xml:space="preserve">Algemeen</text>
<text transform="translate(1329.26,262.50) scale(1.0396,1)" font-family="Liberation Sans" font-size="22.5" fill="#800000" font-weight="bold" xml:space="preserve">10/04/2020</text>
<text transform="translate(1328.00,312.60) scale(1.0509,1)" font-family="Liberation Sans" font-size="22.5" fill="#800000" font-weight="bold" xml:space="preserve">24/04/2017</text>
<text transform="translate(2732.60,261.80) scale(1.0037,1)" font-family="Liberation Sans" font-size="24" fill="#6a7185" xml:space="preserve">2017/   1</text>
<text transform="translate(2659.66,285.80) scale(1.0436,1)" font-family="Liberation Sans" font-size="21" fill="#6a7185" xml:space="preserve">Hyper file 9 mode</text>
<text transform="translate(2767.50,304.90) scale(1.0189,1)" font-family="Liberation Sans" font-size="21" fill="#6a7185" xml:space="preserve">c:\pya\</text>
<text transform="translate(2849.00,308.30) scale(1.0157,1)" font-family="Liberation Sans" font-size="21" fill="#404040" font-weight="bold" xml:space="preserve">26-12-2019g</text>
<text transform="translate(251.07,372.60) scale(0.9627,1)" font-family="Liberation Sans" font-size="22" fill="#f8cf48" style="stroke:#f8cf48;stroke-width:0.6px" xml:space="preserve">ID</text>
<text transform="translate(376.96,405.00) scale(1.0414,1)" font-family="Liberation Sans" font-size="24" fill="#1e1e1e" style="stroke:#1e1e1e;stroke-width:0.45px" xml:space="preserve">Groep of subgroep (G/S)</text>
<text transform="translate(411.01,436.00) scale(0.9946,1)" font-family="Liberation Sans" font-size="24" fill="#1e1e1e" style="stroke:#1e1e1e;stroke-width:0.45px" xml:space="preserve">Groep</text>
<text transform="translate(547.99,436.00) scale(1.0123,1)" font-family="Liberation Sans" font-size="24" fill="#1e1e1e" style="stroke:#1e1e1e;stroke-width:0.45px" xml:space="preserve">Subgroep</text>
<text transform="translate(180.00,496.00) scale(0.8712,1)" font-family="Liberation Sans" font-size="24" fill="#1a1a1a" font-weight="bold" xml:space="preserve">Groep</text>
<text transform="translate(381.03,499.00) scale(0.9747,1)" font-family="Liberation Sans" font-size="22" fill="#1a1a1a" style="stroke:#1a1a1a;stroke-width:0.45px" xml:space="preserve">1000</text>
<text transform="translate(180.00,538.00) scale(0.8807,1)" font-family="Liberation Sans" font-size="24" fill="#1a1a1a" font-weight="bold" xml:space="preserve">Omschrijving</text>
<text transform="translate(381.02,541.50) scale(0.9829,1)" font-family="Liberation Sans" font-size="22" fill="#1a1a1a" style="stroke:#1a1a1a;stroke-width:0.45px" xml:space="preserve">Groep 1000</text>
<text transform="translate(902.07,627.00) scale(0.9268,1)" font-family="Liberation Sans" font-size="22" fill="#1a1a1a" style="stroke:#1a1a1a;stroke-width:0.45px" xml:space="preserve">DU</text>
<text transform="translate(902.06,663.50) scale(0.9416,1)" font-family="Liberation Sans" font-size="22" fill="#1a1a1a" style="stroke:#1a1a1a;stroke-width:0.45px" xml:space="preserve">EN</text>
<text transform="translate(180.00,718.00) scale(1.0334,1)" font-family="Liberation Sans" font-size="22" fill="#1a1a1a" style="stroke:#1a1a1a;stroke-width:0.45px" xml:space="preserve">Auto. barcode nr.</text>
<text transform="translate(506.00,720.50) scale(0.9167,1)" font-family="Liberation Sans" font-size="22" fill="#1a1a1a" style="stroke:#1a1a1a;stroke-width:0.45px" xml:space="preserve">0</text>
<text transform="translate(180.00,766.00) scale(0.8785,1)" font-family="Liberation Sans" font-size="24" fill="#1a1a1a" font-weight="bold" xml:space="preserve">Volgnummer</text>
<text transform="translate(712.95,943.00) scale(1.0241,1)" font-family="Liberation Sans" font-size="35" fill="#4a5775" font-weight="bold" xml:space="preserve">Positie</text>
<text transform="translate(704.07,981.00) scale(0.9324,1)" font-family="Liberation Sans" font-size="22" fill="#1a1a1a" font-weight="bold" xml:space="preserve">Kolumn</text>
<text transform="translate(902.97,978.00) scale(1.0269,1)" font-family="Liberation Sans" font-size="22" fill="#1a1a1a" font-weight="bold" xml:space="preserve">Rij</text>
<text transform="translate(1108.00,397.60) scale(1.0020,1)" font-family="Liberation Sans" font-size="30" fill="#2a2a2a" font-weight="bold" xml:space="preserve">Overzicht</text>
<text transform="translate(1123.00,436.00) scale(0.9965,1)" font-family="Liberation Sans" font-size="22" fill="#ffffff" style="stroke:#ffffff;stroke-width:0.45px" xml:space="preserve">Groep</text>
<text transform="translate(1271.38,436.00) scale(1.0184,1)" font-family="Liberation Sans" font-size="22" fill="#ffffff" style="stroke:#ffffff;stroke-width:0.45px" xml:space="preserve">Omschrijving</text>
<text transform="translate(2479.12,436.70) scale(0.8800,1)" font-family="Liberation Sans" font-size="22" fill="#ffffff" style="stroke:#ffffff;stroke-width:0.45px" xml:space="preserve">PLU</text>
<text transform="translate(2532.00,436.70) scale(0.9764,1)" font-family="Liberation Sans" font-size="22" fill="#ffffff" style="stroke:#ffffff;stroke-width:0.45px" xml:space="preserve">Volg</text>
<text transform="translate(2589.88,436.70) scale(1.0587,1)" font-family="Liberation Sans" font-size="22" fill="#ffffff" style="stroke:#ffffff;stroke-width:0.45px" xml:space="preserve">Icon</text>
<text transform="translate(2671.59,436.70) scale(1.0114,1)" font-family="Liberation Sans" font-size="22" fill="#ffffff" style="stroke:#ffffff;stroke-width:0.45px" xml:space="preserve">Font</text>
<text transform="translate(2733.02,436.70) scale(0.9809,1)" font-family="Liberation Sans" font-size="22" fill="#ffffff" style="stroke:#ffffff;stroke-width:0.45px" xml:space="preserve">Bold</text>
<text transform="translate(2790.96,436.70) scale(1.0401,1)" font-family="Liberation Sans" font-size="22" fill="#ffffff" style="stroke:#ffffff;stroke-width:0.45px" xml:space="preserve">Foto</text>
<text transform="translate(1104.94,479.00) scale(1.0565,1)" font-family="Liberation Sans" font-size="22" fill="#ffff8e" style="stroke:#ffff8e;stroke-width:0.45px" xml:space="preserve">1000</text>
<text transform="translate(1252.36,479.00) scale(1.0421,1)" font-family="Liberation Sans" font-size="22" fill="#ffff8e" style="stroke:#ffff8e;stroke-width:0.45px" xml:space="preserve">Groep 1000</text>
<text transform="translate(2590.97,479.80) scale(1.0271,1)" font-family="Liberation Sans" font-size="22" fill="#ffff8e" style="stroke:#ffff8e;stroke-width:0.45px" xml:space="preserve">1001</text>
<text transform="translate(2701.80,479.80) scale(0.9985,1)" font-family="Liberation Sans" font-size="22" fill="#ffff8e" style="stroke:#ffff8e;stroke-width:0.45px" xml:space="preserve">10</text>
<text transform="translate(1104.94,515.00) scale(1.0565,1)" font-family="Liberation Sans" font-size="22" fill="#1a1a1a" style="stroke:#1a1a1a;stroke-width:0.45px" xml:space="preserve">2000</text>
<text transform="translate(1252.33,515.00) scale(1.0682,1)" font-family="Liberation Sans" font-size="22" fill="#1a1a1a" style="stroke:#1a1a1a;stroke-width:0.45px" xml:space="preserve">Groenten</text>
<text transform="translate(1106.00,550.50) scale(1.0348,1)" font-family="Liberation Sans" font-size="22" fill="#1a1a1a" style="stroke:#1a1a1a;stroke-width:0.45px" xml:space="preserve">3000</text>
<text transform="translate(1252.24,550.50) scale(1.1565,1)" font-family="Liberation Sans" font-size="22" fill="#1a1a1a" style="stroke:#1a1a1a;stroke-width:0.45px" xml:space="preserve">Fruit</text>
<text transform="translate(1104.08,586.70) scale(0.9167,1)" font-family="Liberation Sans" font-size="22" fill="#1a1a1a" style="stroke:#1a1a1a;stroke-width:0.45px" xml:space="preserve">DIV</text>
<text transform="translate(1252.38,586.70) scale(1.0206,1)" font-family="Liberation Sans" font-size="22" fill="#1a1a1a" style="stroke:#1a1a1a;stroke-width:0.45px" xml:space="preserve">Divers</text>
<text transform="translate(181.57,1054.40) scale(1.0304,1)" font-family="Liberation Sans" font-size="22" fill="#ffffff" style="stroke:#ffffff;stroke-width:0.45px" xml:space="preserve">Divers</text>
<text transform="translate(293.65,1054.40) scale(1.0485,1)" font-family="Liberation Sans" font-size="22" fill="#1a1a1a" style="stroke:#1a1a1a;stroke-width:0.45px" xml:space="preserve">Statistieken</text>
<text transform="translate(433.00,1054.40) scale(0.9989,1)" font-family="Liberation Sans" font-size="22" fill="#1a1a1a" style="stroke:#1a1a1a;stroke-width:0.45px" xml:space="preserve">Samenstelling</text>
<text transform="translate(623.41,1054.40) scale(0.9863,1)" font-family="Liberation Sans" font-size="22" fill="#1a1a1a" style="stroke:#1a1a1a;stroke-width:0.45px" xml:space="preserve">Nota</text>
<text transform="translate(216.55,1137.00) scale(0.9507,1)" font-family="Liberation Sans" font-size="23" fill="#1a1a1a" style="stroke:#1a1a1a;stroke-width:0.45px" xml:space="preserve">PLU actief</text>
<text transform="translate(215.40,1195.00) scale(1.0481,1)" font-family="Liberation Sans" font-size="23" fill="#1a1a1a" style="stroke:#1a1a1a;stroke-width:0.45px" xml:space="preserve">Internet  actief</text>
<text transform="translate(217.50,1251.00) scale(0.9902,1)" font-family="Liberation Sans" font-size="23" fill="#1a1a1a" style="stroke:#1a1a1a;stroke-width:0.45px" xml:space="preserve">Alle Artikels laten zien</text>
<text transform="translate(217.50,1307.00) scale(1.0232,1)" font-family="Liberation Sans" font-size="23" fill="#1a1a1a" style="stroke:#1a1a1a;stroke-width:0.45px" xml:space="preserve">Artikels met foto</text>
<text transform="translate(216.50,1360.00) scale(0.9958,1)" font-family="Liberation Sans" font-size="23" fill="#1a1a1a" style="stroke:#1a1a1a;stroke-width:0.45px" xml:space="preserve">Gebruiken als prefix voor artikel omschrijving</text>
<text transform="translate(216.59,1417.00) scale(0.9101,1)" font-family="Liberation Sans" font-size="23" fill="#1a1a1a" style="stroke:#1a1a1a;stroke-width:0.45px" xml:space="preserve">Leeggoed</text>
<text transform="translate(787.67,1149.80) scale(1.0127,1)" font-family="Liberation Sans" font-size="37" fill="#4f5a78" font-weight="bold" xml:space="preserve">Kleur en tekst van de knoppen</text>
<text transform="translate(718.50,1199.70) scale(1.0151,1)" font-family="Liberation Sans" font-size="22" fill="#1a1a1a" style="stroke:#1a1a1a;stroke-width:0.45px" xml:space="preserve">Tekstkleur</text>
<text transform="translate(718.50,1244.00) scale(1.0197,1)" font-family="Liberation Sans" font-size="22" fill="#1a1a1a" style="stroke:#1a1a1a;stroke-width:0.45px" xml:space="preserve">Achtergrondkleur</text>
<text transform="translate(1226.30,1251.50) scale(0.8993,1)" font-family="Liberation Sans" font-size="54" fill="#8c8c8c" font-weight="bold" style="stroke:#e020e0;stroke-width:1.5px;paint-order:stroke" xml:space="preserve">1001</text>
<text transform="translate(1248.97,1224.60) scale(1.0254,1)" font-family="Liberation Sans" font-size="26" fill="#000000" xml:space="preserve">Groep</text>
<text transform="translate(1258.81,1253.00) scale(0.9862,1)" font-family="Liberation Sans" font-size="26" fill="#000000" xml:space="preserve">1000</text>
<text transform="translate(972.49,1395.00) scale(1.0065,1)" font-family="Liberation Sans" font-size="36" fill="#4f5a78" font-weight="bold" xml:space="preserve">Build Icon</text>
<text transform="translate(717.02,1431.00) scale(0.9791,1)" font-family="Liberation Sans" font-size="22" fill="#1a1a1a" style="stroke:#1a1a1a;stroke-width:0.45px" xml:space="preserve">Code Icon</text>
<text transform="translate(899.06,1433.00) scale(0.9433,1)" font-family="Liberation Sans" font-size="22" fill="#1a1a1a" style="stroke:#1a1a1a;stroke-width:0.45px" xml:space="preserve">1001</text>
<text transform="translate(1043.49,1431.00) scale(1.0138,1)" font-family="Liberation Sans" font-size="22" fill="#1a1a1a" style="stroke:#1a1a1a;stroke-width:0.45px" xml:space="preserve">Font</text>
<text transform="translate(1112.61,1433.00) scale(0.9899,1)" font-family="Liberation Sans" font-size="22" fill="#1a1a1a" style="stroke:#1a1a1a;stroke-width:0.45px" xml:space="preserve">10</text>
<text transform="translate(1212.53,1431.00) scale(0.9690,1)" font-family="Liberation Sans" font-size="22" fill="#1a1a1a" style="stroke:#1a1a1a;stroke-width:0.45px" xml:space="preserve">Bold</text>
<text transform="translate(224.66,1473.00) scale(1.0427,1)" font-family="Liberation Sans" font-size="22" fill="#f4c545" xml:space="preserve">Boekhouding</text>
<text transform="translate(187.64,1534.50) scale(0.9590,1)" font-family="Liberation Sans" font-size="22" fill="#1a1a1a" style="stroke:#1a1a1a;stroke-width:0.45px" xml:space="preserve">Rekening</text>
<text transform="translate(187.61,1581.50) scale(0.9889,1)" font-family="Liberation Sans" font-size="22" fill="#1a1a1a" style="stroke:#1a1a1a;stroke-width:0.45px" xml:space="preserve">Kostenplaats</text>
<text transform="translate(187.61,1629.00) scale(0.9949,1)" font-family="Liberation Sans" font-size="22" fill="#1a1a1a" style="stroke:#1a1a1a;stroke-width:0.45px" xml:space="preserve">Kostensoort</text>
<text transform="translate(2622.60,1648.00) scale(0.9569,1)" font-family="Liberation Sans" font-size="21" fill="#a2a6aa" xml:space="preserve">Activate Windows</text>
<text transform="translate(2622.60,1668.00) scale(1.0012,1)" font-family="Liberation Sans" font-size="15" fill="#a2a6aa" xml:space="preserve">Go to Settings to activate Windows.</text>
<text transform="translate(288.70,1802.60) scale(0.9747,1)" font-family="Liberation Sans" font-size="30" fill="#222222" xml:space="preserve">Type here to search</text>
<text transform="translate(2776.00,1780.50) scale(0.9870,1)" font-family="Liberation Sans" font-size="23" fill="#111111" xml:space="preserve">3:34 PM</text>
<text transform="translate(2764.00,1817.40) scale(1.0677,1)" font-family="Liberation Sans" font-size="23" fill="#111111" xml:space="preserve">4/16/2020</text>
</svg>
</div></body></html>
